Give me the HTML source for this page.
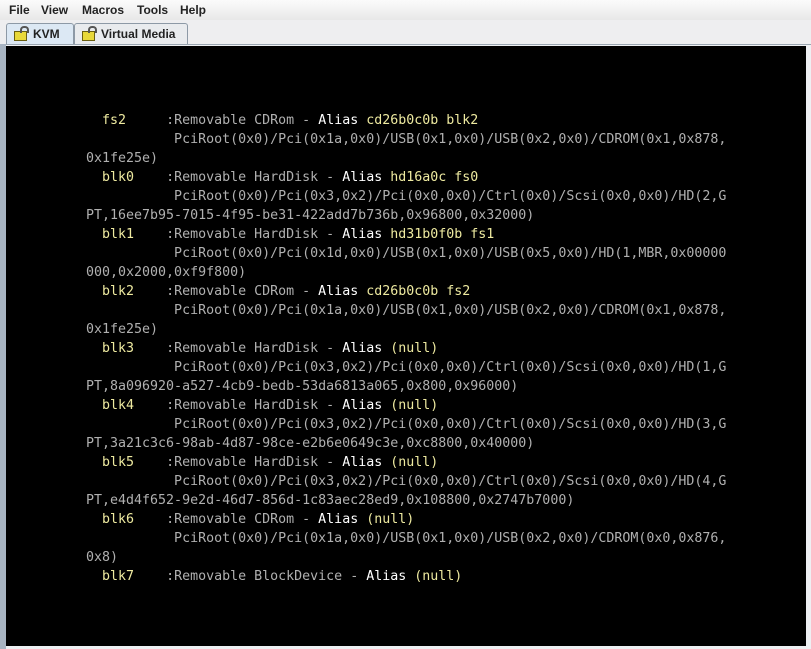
<!DOCTYPE html>
<html><head><style>
body{margin:0;width:811px;height:649px;overflow:hidden;background:#eef0f3;font-family:"Liberation Sans",sans-serif;position:relative}
#menu{position:absolute;left:0;top:0;width:811px;height:20px;background:linear-gradient(#fbfbfb,#e8e8e8);font-size:12px;font-weight:bold;color:#222}
#menu span{position:absolute;top:3px}
#tabs{position:absolute;left:0;top:20px;width:811px;height:24px;background:#eeeef0;border-bottom:1px solid #9aa5b0}
.tab{position:absolute;top:3px;height:20px;border:1px solid #8d99a6;border-bottom:none;border-radius:3px 3px 0 0;font-size:12px;font-weight:bold;color:#222}
.tab span{position:absolute;left:26px;top:3px}
.lock{position:absolute;left:7px;top:7px;width:11px;height:8px;background:#e8d83a;border:1px solid #6a5f10}
.lock:before{content:"";position:absolute;left:5px;top:-6px;width:5px;height:5px;border:2px solid #555;border-bottom:none;border-radius:4px 4px 0 0}
#scr{position:absolute;left:6px;top:46px;width:800px;height:600px;background:#000}
#lb{position:absolute;left:0;top:44px;width:6px;height:605px;background:#a8b4c2}
pre{position:absolute;left:86px;top:111px;margin:0;font-family:"DejaVu Sans Mono",monospace;font-size:13.3px;line-height:19px;color:#b0b0b0;letter-spacing:0}
.y{color:#eeeaa0}.w{color:#fff}
</style></head><body>
<div id="menu"><span style="left:9px">File</span><span style="left:41px">View</span><span style="left:82px">Macros</span><span style="left:137px">Tools</span><span style="left:180px">Help</span></div>
<div id="tabs">
<div class="tab" style="left:6px;width:66px;background:#dce8f4"><div class="lock"></div><span>KVM</span></div>
<div class="tab" style="left:74px;width:112px;background:#e9ebee"><div class="lock"></div><span>Virtual Media</span></div>
</div>
<div id="lb"></div>
<div id="scr"></div>
<pre>  <span class="y">fs2</span>     :Removable CDRom - <span class="w">Alias</span> <span class="y">cd26b0c0b blk2</span>
           PciRoot(0x0)/Pci(0x1a,0x0)/USB(0x1,0x0)/USB(0x2,0x0)/CDROM(0x1,0x878,
0x1fe25e)
  <span class="y">blk0</span>    :Removable HardDisk - <span class="w">Alias</span> <span class="y">hd16a0c fs0</span>
           PciRoot(0x0)/Pci(0x3,0x2)/Pci(0x0,0x0)/Ctrl(0x0)/Scsi(0x0,0x0)/HD(2,G
PT,16ee7b95-7015-4f95-be31-422add7b736b,0x96800,0x32000)
  <span class="y">blk1</span>    :Removable HardDisk - <span class="w">Alias</span> <span class="y">hd31b0f0b fs1</span>
           PciRoot(0x0)/Pci(0x1d,0x0)/USB(0x1,0x0)/USB(0x5,0x0)/HD(1,MBR,0x00000
000,0x2000,0xf9f800)
  <span class="y">blk2</span>    :Removable CDRom - <span class="w">Alias</span> <span class="y">cd26b0c0b fs2</span>
           PciRoot(0x0)/Pci(0x1a,0x0)/USB(0x1,0x0)/USB(0x2,0x0)/CDROM(0x1,0x878,
0x1fe25e)
  <span class="y">blk3</span>    :Removable HardDisk - <span class="w">Alias</span> <span class="y">(null)</span>
           PciRoot(0x0)/Pci(0x3,0x2)/Pci(0x0,0x0)/Ctrl(0x0)/Scsi(0x0,0x0)/HD(1,G
PT,8a096920-a527-4cb9-bedb-53da6813a065,0x800,0x96000)
  <span class="y">blk4</span>    :Removable HardDisk - <span class="w">Alias</span> <span class="y">(null)</span>
           PciRoot(0x0)/Pci(0x3,0x2)/Pci(0x0,0x0)/Ctrl(0x0)/Scsi(0x0,0x0)/HD(3,G
PT,3a21c3c6-98ab-4d87-98ce-e2b6e0649c3e,0xc8800,0x40000)
  <span class="y">blk5</span>    :Removable HardDisk - <span class="w">Alias</span> <span class="y">(null)</span>
           PciRoot(0x0)/Pci(0x3,0x2)/Pci(0x0,0x0)/Ctrl(0x0)/Scsi(0x0,0x0)/HD(4,G
PT,e4d4f652-9e2d-46d7-856d-1c83aec28ed9,0x108800,0x2747b7000)
  <span class="y">blk6</span>    :Removable CDRom - <span class="w">Alias</span> <span class="y">(null)</span>
           PciRoot(0x0)/Pci(0x1a,0x0)/USB(0x1,0x0)/USB(0x2,0x0)/CDROM(0x0,0x876,
0x8)
  <span class="y">blk7</span>    :Removable BlockDevice - <span class="w">Alias</span> <span class="y">(null)</span></pre>
</body></html>
